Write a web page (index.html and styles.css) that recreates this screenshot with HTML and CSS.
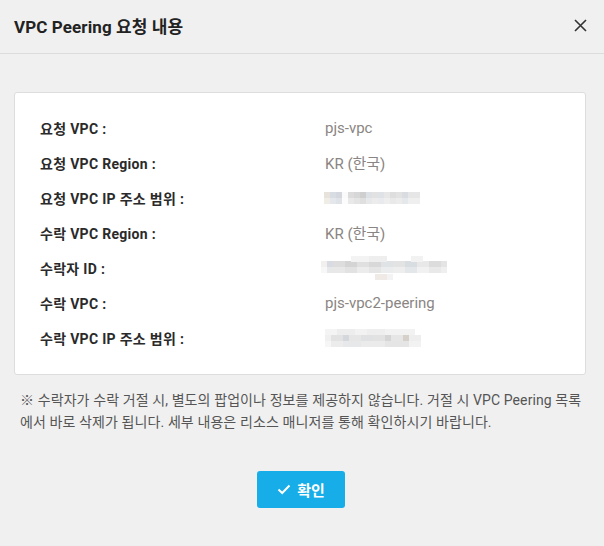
FILE: index.html
```html
<!DOCTYPE html>
<html lang="ko">
<head>
<meta charset="utf-8">
<title>VPC Peering 요청 내용</title>
<link rel="stylesheet" href="styles.css">
</head>
<body>
<div class="dialog">
  <header class="head">
    <h1 class="title">VPC Peering 요청 내용</h1>
    <button class="close" aria-label="닫기">
      <svg width="13" height="13" viewBox="0 0 13 13"><path d="M1 1L12 12M12 1L1 12" stroke="#333" stroke-width="1.6" fill="none"/></svg>
    </button>
  </header>
  <main class="body">
    <section class="card">
      <div class="row"><span class="label">요청 VPC :</span><span class="value">pjs-vpc</span></div>
      <div class="row"><span class="label">요청 VPC Region :</span><span class="value">KR (한국)</span></div>
      <div class="row"><span class="label">요청 VPC IP 주소 범위 :</span><span class="value"><span class="blur blur-ip1"></span></span></div>
      <div class="row"><span class="label">수락 VPC Region :</span><span class="value">KR (한국)</span></div>
      <div class="row"><span class="label">수락자 ID :</span><span class="value"><span class="blur blur-id"></span></span></div>
      <div class="row"><span class="label">수락 VPC :</span><span class="value">pjs-vpc2-peering</span></div>
      <div class="row"><span class="label">수락 VPC IP 주소 범위 :</span><span class="value"><span class="blur blur-ip2"></span></span></div>
    </section>
    <p class="note">※ 수락자가 수락 거절 시, 별도의 팝업이나 정보를 제공하지 않습니다. 거절 시 VPC Peering 목록에서 바로 삭제가 됩니다. 세부 내용은 리소스 매니저를 통해 확인하시기 바랍니다.</p>
    <div class="actions">
      <button class="confirm">
        <svg width="14" height="11" viewBox="0 0 14 11"><path d="M1.5 5.5L5.2 9L12.5 1.5" stroke="#fff" stroke-width="2" fill="none"/></svg>
        <span>확인</span>
      </button>
    </div>
  </main>
</div>
</body>
</html>
```

FILE: styles.css
```css
* { box-sizing: border-box; }
html, body {
  margin: 0;
  padding: 0;
  background: #f0f0f0;
  font-family: Roboto, "Noto Sans CJK KR", sans-serif;
}
.dialog {
  width: 604px;
  height: 546px;
}
.head {
  height: 54px;
  border-bottom: 1px solid #dcdcdc;
  display: flex;
  align-items: center;
  justify-content: space-between;
  padding: 0 17px 2px 14px;
}
.title {
  margin: 0;
  font-size: 17px;
  font-weight: 700;
  color: #222;
  letter-spacing: 0.1px;
}
.close {
  border: 0;
  background: none;
  padding: 0;
  width: 13px;
  height: 13px;
  display: flex;
  cursor: pointer;
}
.body {
  padding: 38px 18px 0 14px;
}
.card {
  background: #fff;
  border: 1px solid #dddddd;
  border-radius: 3px;
  padding: 17px 25px 19px;
}
.row {
  height: 35px;
  display: flex;
  align-items: center;
}
.label {
  width: 285px;
  font-size: 14px;
  font-weight: 700;
  color: #2a2a2a;
  letter-spacing: 0.3px;
}
.value {
  color: #8a8582;
  font-size: 15px;
  display: flex;
  align-items: center;
}
.blur {
  display: block;
  background-size: 100% 50%;
  background-repeat: no-repeat;
}
.blur-ip1 {
  width: 96px;
  height: 12px;
  margin-left: -1px;
  background-image:
    linear-gradient(to right, #e8e2dc 0 6px, #d8dde4 6px 12px, #d4d8de 12px 18px, #fafafa 18px 24px, #dcdcdc 24px 30px, #d7d7d7 30px 36px, #cfcfcf 36px 42px, #dde1e5 42px 48px, #e2e2e2 48px 54px, #dfe3e7 54px 60px, #e7e7e7 60px 66px, #dedede 66px 72px, #e2e2e2 72px 78px, #d9dde1 78px 84px, #e6e6e6 84px 96px),
    linear-gradient(to right, #f0ece6 0 6px, #e4e8ec 6px 12px, #dfe3e8 12px 18px, #fcfcfc 18px 24px, #e9e9e9 24px 30px, #e4e4e4 30px 36px, #dfdfdf 36px 42px, #e6e8ea 42px 48px, #ececec 48px 54px, #e8eaee 54px 60px, #eeeeee 60px 66px, #e9e9e9 66px 72px, #ececec 72px 78px, #e5e8ea 78px 84px, #efefef 84px 96px);
  background-position: 0 0, 0 100%;
}
.blur-id {
  width: 128px;
  height: 24px;
  margin-left: -4px;
  background-size: 100% 25%;
  background-image:
    linear-gradient(to right, transparent 0 30px, #f3f3f3 30px 48px, #eeeeee 48px 66px, transparent 66px 90px, #f2f2f2 90px 102px, transparent 102px),
    linear-gradient(to right, #f2f0ee 0 6px, #d8dce2 6px 12px, #dddddd 12px 24px, #d4d4d4 24px 36px, #e0e0e0 36px 48px, #d8d8d8 48px 60px, #dfe3e6 60px 72px, #e3e3e3 72px 84px, #d8dde2 84px 96px, #e8e8e8 96px 108px, #dcdcdc 108px 120px, #e4e4e4 120px 126px, transparent 126px),
    linear-gradient(to right, #f7f7f7 0 6px, #e6e8ea 6px 12px, #e8e8e8 12px 24px, #e2e2e2 24px 36px, #ececec 36px 48px, #e5e5e5 48px 60px, #eaecee 60px 72px, #eeeeee 72px 84px, #e4e7ea 84px 96px, #f1f1f1 96px 108px, #e9e9e9 108px 120px, #efefef 120px 126px, transparent 126px),
    linear-gradient(to right, transparent 0 54px, #efeae6 54px 66px, #f3f3f3 66px 72px, transparent 72px);
  background-position: 0 0, 0 33.33%, 0 66.66%, 0 100%;
}
.blur-ip2 {
  width: 98px;
  height: 18px;
  margin-left: 0;
  background-size: 100% 33.34%;
  background-image:
    linear-gradient(to right, #f4f4f4 0 12px, #ededed 12px 30px, #f2f2f2 30px 42px, #eeeeee 42px 60px, #f2f2f2 60px 90px, transparent 90px),
    linear-gradient(to right, #f0f0f0 0 6px, #e2e2e2 6px 18px, #d4d8dc 18px 24px, #e6e6e6 24px 36px, #dfe1e3 36px 48px, #e2e2e2 48px 60px, #d5d5d5 60px 66px, #e6e6e6 66px 78px, #d6d0ca 78px 84px, #eeeeee 84px 96px, transparent 96px),
    linear-gradient(to right, #f6f6f6 0 6px, #ececec 6px 18px, #e6e8ea 18px 36px, #ebebeb 36px 60px, #e5e5e5 60px 84px, #f2f2f2 84px 96px, transparent 96px);
  background-position: 0 0, 0 50%, 0 100%;
}
.note {
  margin: 14px 0 0 6px;
  font-size: 14px;
  line-height: 22px;
  color: #555;
  letter-spacing: 0.1px;
}
.actions {
  display: flex;
  justify-content: center;
  margin-top: 38px;
  padding-left: 2px;
}
.confirm {
  width: 88px;
  height: 37px;
  border: 0;
  border-radius: 3px;
  background: #16ade8;
  color: #fff;
  font-family: Roboto, "Noto Sans CJK KR", sans-serif;
  font-size: 15px;
  font-weight: 700;
  display: flex;
  align-items: center;
  justify-content: center;
  gap: 6px;
  padding: 0 0 1px;
  cursor: pointer;
}
```
